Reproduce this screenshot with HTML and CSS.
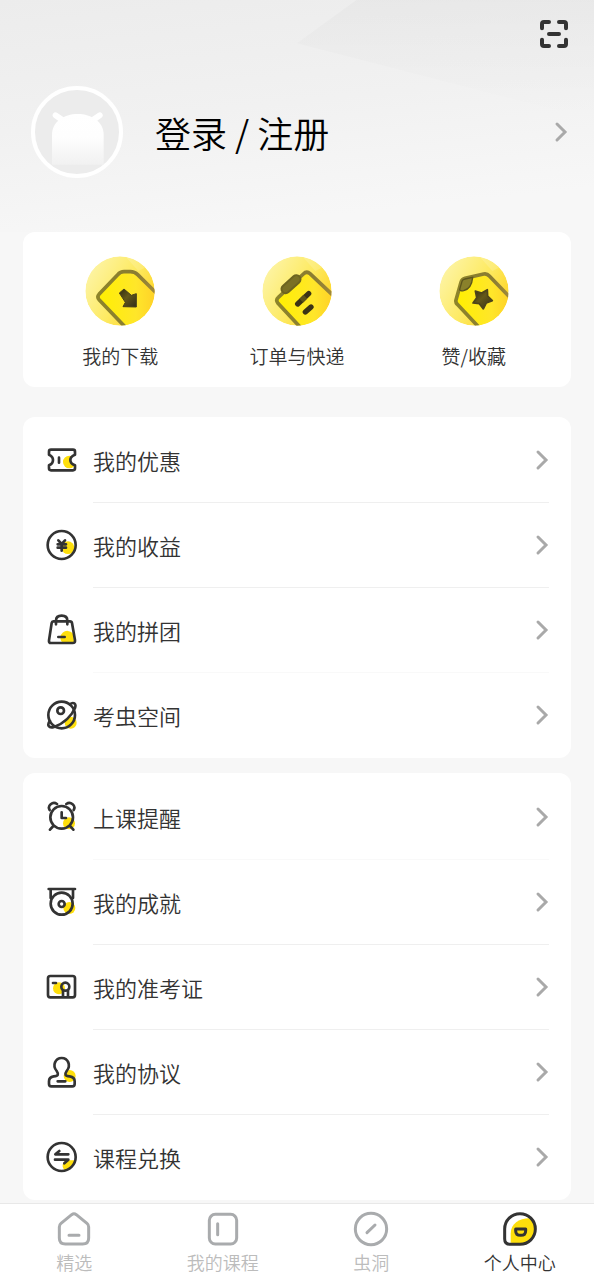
FILE: index.html
```html
<!DOCTYPE html>
<html lang="zh-CN">
<head>
<meta charset="utf-8">
<meta name="viewport" content="width=device-width, initial-scale=1">
<title>个人中心</title>
<link rel="stylesheet" href="styles.css">
</head>
<body>
<div class="page">
  <header class="hero">
    <div class="toolbar">
      <button class="scan" type="button" aria-label="扫一扫">
        <svg viewBox="0 0 84 84"><path d="M6 25V12Q6 6 12 6H27M57 6H72Q78 6 78 12V25M78 59V72Q78 78 72 78H57M27 78H12Q6 78 6 72V59M27 42H57"/></svg>
      </button>
    </div>
    <a class="profile" href="#login">
      <svg class="avatar" viewBox="0 0 276 276" aria-hidden="true">
        <defs><linearGradient id="bug" x1="0" y1="0" x2="0" y2="1"><stop offset="0" stop-color="#fff"/><stop offset=".45" stop-color="#fefefe"/><stop offset="1" stop-color="#f1f1f1"/></linearGradient></defs>
        <circle cx="138" cy="138" r="132" fill="#ececec" stroke="#fff" stroke-width="12"/>
        <path d="M74 88L94 102M206 88L186 102" stroke="#fff" stroke-width="18" stroke-linecap="round"/>
        <path d="M63 236V146C63 108 98 84 140 84S218 108 218 146V236Z" fill="url(#bug)"/>
      </svg>
      <span class="login">登录 / 注册</span>
      <svg class="chevron" viewBox="0 0 14 22" aria-hidden="true"><path d="M3 3L11 11L3 19"/></svg>
    </a>
  </header>

  <main class="content">
    <nav class="card shortcuts" aria-label="快捷入口">
      <a class="shortcut" href="#downloads">
        <svg viewBox="0 0 210 210" aria-hidden="true">
          <defs>
            <linearGradient id="disc" x1="0" y1=".15" x2="1" y2=".75"><stop offset="0" stop-color="#fdf5ac"/><stop offset=".55" stop-color="#fdea62"/><stop offset="1" stop-color="#ffd21e"/></linearGradient>
            <linearGradient id="plate" x1="0" y1="0" x2="1" y2="0"><stop offset="0" stop-color="#fff000"/><stop offset=".6" stop-color="#ffe62a"/><stop offset="1" stop-color="#ffca28"/></linearGradient>
            <linearGradient id="edge" x1="0" y1="0" x2="1" y2="0"><stop offset="0" stop-color="#8d842a"/><stop offset=".6" stop-color="#8a7c32"/><stop offset="1" stop-color="#a98e3c"/></linearGradient>
            <linearGradient id="ink" x1="0" y1="0" x2="1" y2="1"><stop offset="0" stop-color="#302b12"/><stop offset=".45" stop-color="#635819"/><stop offset="1" stop-color="#332e1b"/></linearGradient>
            <clipPath id="round"><circle cx="105" cy="105" r="104"/></clipPath>
          </defs>
          <g clip-path="url(#round)">
            <circle cx="105" cy="105" r="104" fill="url(#disc)"/>
            <path d="M120 0L160 45L210 20V0Z" fill="#fff" opacity=".16"/>
            <path d="M230 127L158 56Q149 47 136 47H117Q106 47 98 56L42 115Q35 123 43 132L135 228" fill="url(#plate)" stroke="url(#edge)" stroke-width="11"/>
            <path d="M103 111L117 99L139 118L154 113V153L114 152L121 139Z" fill="url(#ink)" stroke="#49411a" stroke-width="3" stroke-linejoin="round"/>
          </g>
        </svg>
        <span>我的下载</span>
      </a>
      <a class="shortcut" href="#orders">
        <svg viewBox="0 0 210 210" aria-hidden="true">
          <g clip-path="url(#round)">
            <circle cx="105" cy="105" r="104" fill="url(#disc)"/>
            <path d="M120 0L160 45L210 20V0Z" fill="#fff" opacity=".16"/>
            <path d="M230 134L144 53Q134 44 124 54L49 124Q40 132 48 142L130 230" fill="url(#plate)" stroke="url(#edge)" stroke-width="11"/>
            <path d="M71 99L103 70" stroke="#6d641f" stroke-width="31" stroke-linecap="round"/>
            <path d="M71 99L103 70" stroke="#7a7025" stroke-width="19" stroke-linecap="round"/>
            <path d="M107 144L140 113M130 168L147 153" stroke="#3b3315" stroke-width="16" stroke-linecap="round"/>
            <path d="M118 134L130 122" stroke="#5d5319" stroke-width="16"/>
          </g>
        </svg>
        <span>订单与快递</span>
      </a>
      <a class="shortcut" href="#favorites">
        <svg viewBox="0 0 210 210" aria-hidden="true">
          <g clip-path="url(#round)">
            <circle cx="105" cy="105" r="104" fill="url(#disc)"/>
            <path d="M120 0L160 45L210 20V0Z" fill="#fff" opacity=".16"/>
            <path d="M230 142L151 60Q144 52 134 54L78 67Q69 69 66 79L51 132Q49 139 55 145L135 230" fill="url(#plate)" stroke="url(#edge)" stroke-width="11" stroke-linejoin="round"/>
            <path d="M62 100L69 76Q71 70 78 69L101 64Q98 98 74 104Q63 106 62 100Z" fill="#8a812b" stroke="#5d551d" stroke-width="4"/>
            <path d="M145 101L146 120L160 134L142 141L133 159L121 143L102 141L113 125L109 105L128 111Z" fill="url(#ink)" stroke="#4d441b" stroke-width="5" stroke-linejoin="round"/>
          </g>
        </svg>
        <span>赞/收藏</span>
      </a>
    </nav>

    <nav class="card menu menu-first" aria-label="我的服务">
      <a class="row" href="#coupons">
        <svg class="icon" viewBox="0 0 96 96" aria-hidden="true">
          <clipPath id="ticket"><path d="M15 17H81Q87 17 87 23V32Q73 37 73 48T87 64V73Q87 79 81 79H15Q9 79 9 73V64Q21 59 21 48T9 32V23Q9 17 15 17Z"/></clipPath>
          <circle class="spot" cx="70" cy="54" r="19" clip-path="url(#ticket)"/>
          <path d="M15 17H81Q87 17 87 23V32Q73 37 73 48T87 64V73Q87 79 81 79H15Q9 79 9 73V64Q21 59 21 48T9 32V23Q9 17 15 17ZM39 41V56"/>
        </svg>
        <span class="label">我的优惠</span>
        <svg class="chevron" viewBox="0 0 14 22" aria-hidden="true"><path d="M3 3L11 11L3 19"/></svg>
      </a>
      <a class="row" href="#earnings">
        <svg class="icon" viewBox="0 0 96 96" aria-hidden="true">
          <circle class="spot" cx="66" cy="56" r="19"/>
          <circle cx="47" cy="48" r="42"/>
          <path d="M37 34L47 45L57 34M47 45V65M35 46H60M35 56H60"/>
        </svg>
        <span class="label">我的收益</span>
        <svg class="chevron" viewBox="0 0 14 22" aria-hidden="true"><path d="M3 3L11 11L3 19"/></svg>
      </a>
      <a class="row" href="#groups">
        <svg class="icon" viewBox="0 0 96 96" aria-hidden="true">
          <path class="spot" d="M48 85A18 18 0 1 1 80 58L85 85Z"/>
          <path d="M22 22H72Q77 22 78 27L87 79Q88 87 80 87H15Q8 87 9 79L17 27Q18 22 22 22ZM30 31V20Q30 5 47 5T64 20V31M37 69H56"/>
        </svg>
        <span class="label">我的拼团</span>
        <svg class="chevron" viewBox="0 0 14 22" aria-hidden="true"><path d="M3 3L11 11L3 19"/></svg>
      </a>
      <a class="row faint" href="#space">
        <svg class="icon" viewBox="0 0 96 96" aria-hidden="true">
          <circle class="spot" cx="74" cy="71" r="18"/>
          <circle cx="47" cy="48" r="40"/>
          <circle cx="44" cy="35" r="10"/>
          <path d="M71 16C82 8 92 13 87 27C78 49 55 73 24 84C8 89 2 77 12 66"/>
        </svg>
        <span class="label">考虫空间</span>
        <svg class="chevron" viewBox="0 0 14 22" aria-hidden="true"><path d="M3 3L11 11L3 19"/></svg>
      </a>
    </nav>

    <nav class="card menu" aria-label="学习服务">
      <a class="row" href="#reminders">
        <svg class="icon" viewBox="0 0 96 96" aria-hidden="true">
          <circle class="spot" cx="69" cy="67" r="18"/>
          <circle cx="47" cy="49" r="34"/>
          <path d="M11 27C3 14 20 0 33 9M83 27C91 14 74 0 61 9M22 75L12 86M72 75L82 86M47 34V51H60"/>
        </svg>
        <span class="label">上课提醒</span>
        <svg class="chevron" viewBox="0 0 14 22" aria-hidden="true"><path d="M3 3L11 11L3 19"/></svg>
      </a>
      <a class="row faint" href="#achievements">
        <svg class="icon" viewBox="0 0 96 96" aria-hidden="true">
          <circle class="spot" cx="70" cy="66" r="18"/>
          <path d="M8 9H87M14 10V36M81 10V36"/>
          <circle cx="47" cy="53" r="33"/>
          <circle cx="47" cy="54" r="9"/>
        </svg>
        <span class="label">我的成就</span>
        <svg class="chevron" viewBox="0 0 14 22" aria-hidden="true"><path d="M3 3L11 11L3 19"/></svg>
      </a>
      <a class="row" href="#admission">
        <svg class="icon" viewBox="0 0 96 96" aria-hidden="true">
          <circle class="spot" cx="39" cy="52" r="18"/>
          <rect x="6" y="15" width="81" height="64" rx="7"/>
          <path d="M21 36H30M51 57V76M66 57V76"/>
          <circle cx="58" cy="47" r="12"/>
        </svg>
        <span class="label">我的准考证</span>
        <svg class="chevron" viewBox="0 0 14 22" aria-hidden="true"><path d="M3 3L11 11L3 19"/></svg>
      </a>
      <a class="row" href="#agreements">
        <svg class="icon" viewBox="0 0 96 96" aria-hidden="true">
          <circle class="spot" cx="71" cy="60" r="18"/>
          <path d="M9 84V76Q9 63 23 61C38 60 38 54 32 45C18 28 28 6 47 6S76 28 62 45C56 54 56 60 71 61Q86 63 86 76V84Q86 91 79 91H16Q9 91 9 84ZM35 76H58"/>
        </svg>
        <span class="label">我的协议</span>
        <svg class="chevron" viewBox="0 0 14 22" aria-hidden="true"><path d="M3 3L11 11L3 19"/></svg>
      </a>
      <a class="row" href="#redeem">
        <svg class="icon" viewBox="0 0 96 96" aria-hidden="true">
          <path class="spot" d="M54 86A18 18 0 0 1 60 58H87A42 42 0 0 1 54 89Z"/>
          <circle cx="47" cy="48" r="42"/>
          <path d="M40 30L28 40H67M27 56H67L55 67"/>
        </svg>
        <span class="label">课程兑换</span>
        <svg class="chevron" viewBox="0 0 14 22" aria-hidden="true"><path d="M3 3L11 11L3 19"/></svg>
      </a>
    </nav>
  </main>

  <nav class="tabs" aria-label="主导航">
    <a class="tab" href="#featured">
      <svg viewBox="0 0 108 108" aria-hidden="true"><path d="M47 11Q54 6 61 11L93 37Q98 41 98 48V81Q98 99 80 99H28Q10 99 10 81V48Q10 41 15 37ZM39 73H69"/></svg>
      <span>精选</span>
    </a>
    <a class="tab" href="#courses">
      <svg viewBox="0 0 108 108" aria-hidden="true"><rect x="13" y="10" width="82" height="89" rx="18"/><path d="M38 38V71"/></svg>
      <span>我的课程</span>
    </a>
    <a class="tab" href="#wormhole">
      <svg viewBox="0 0 108 108" aria-hidden="true"><circle cx="54" cy="54" r="47"/><path d="M42 65L66 42"/></svg>
      <span>虫洞</span>
    </a>
    <a class="tab active" href="#me" aria-current="page">
      <svg viewBox="0 0 108 108" aria-hidden="true">
        <path class="spot" d="M26 95V68C26 39 51 22 82 22Q99 36 99 54A45 45 0 0 1 54 98Z"/>
        <path d="M54 8A46 46 0 1 1 54 100H24Q8 100 8 84V54A46 46 0 0 1 54 8ZM41 54H71V59Q71 73 56 73T41 59Z"/>
      </svg>
      <span>个人中心</span>
    </a>
  </nav>
</div>
</body>
</html>
```

FILE: styles.css
```css
* {
  box-sizing: border-box;
}

body {
  margin: 0;
  background: #f7f7f7;
  color: #333;
  font-family: "Noto Sans CJK SC", sans-serif;
  font-weight: 350;
}

a {
  color: inherit;
  text-decoration: none;
}

svg {
  display: block;
  flex: none;
  fill: none;
}

.page {
  display: flex;
  flex-direction: column;
  min-height: 100vh;
}

.hero {
  position: relative;
  padding: 20px 26px 54px 31px;
  background: linear-gradient(174deg, #ececec 0%, #f1f1f1 45%, #f7f7f7 85%);
}

.hero::before {
  content: "";
  position: absolute;
  top: 0;
  right: 0;
  width: 50%;
  height: 120px;
  background: linear-gradient(to bottom, rgba(0, 0, 0, 0.025), rgba(0, 0, 0, 0));
  clip-path: polygon(20% 0, 100% 0, 100% 100%, 0 36%);
}

.toolbar {
  position: relative;
  display: flex;
  justify-content: flex-end;
}

.scan {
  padding: 0;
  border: 0;
  background: none;
}

.scan svg {
  width: 28px;
  height: 28px;
  stroke: #333;
  stroke-width: 12;
  stroke-linecap: round;
}

.profile {
  position: relative;
  display: flex;
  align-items: center;
  margin-top: 38px;
  color: #000;
}

.avatar {
  width: 92px;
  height: 92px;
}

.login {
  flex: 1;
  margin-left: 32px;
  font-size: 36px;
  line-height: 48px;
}

.chevron {
  width: 14px;
  height: 22px;
  stroke: #a9a9a9;
  stroke-width: 3;
  stroke-linecap: round;
}

.content {
  flex: 1;
  padding: 0 23px 3px;
}

.card {
  border-radius: 12px;
  background: #fff;
}

.shortcuts {
  display: grid;
  grid-template-columns: repeat(3, 1fr);
  padding: 24px 9px 17px;
}

.shortcut {
  display: flex;
  flex-direction: column;
  align-items: center;
  gap: 16px;
  font-size: 19px;
  line-height: 28px;
}

.shortcut svg {
  width: 70px;
  height: 70px;
}

.menu {
  margin-top: 15px;
  padding: 1px 0;
}

.menu-first {
  margin-top: 30px;
  padding-top: 0;
}

.row {
  position: relative;
  display: flex;
  align-items: center;
  height: 85px;
  padding: 0 22px 0 23px;
}

.row + .row::before {
  content: "";
  position: absolute;
  top: 0;
  left: 70px;
  right: 22px;
  height: 1px;
  background: #efefef;
}

.row + .faint::before {
  background: #f9f9f9;
}

.icon {
  width: 32px;
  height: 32px;
  stroke: #333;
  stroke-width: 8;
  stroke-linecap: round;
  stroke-linejoin: round;
}

.spot {
  fill: #fedf0c;
  stroke: none;
}

.label {
  flex: 1;
  margin-left: 15px;
  font-size: 22px;
  line-height: 32px;
}

.tabs {
  position: sticky;
  bottom: 0;
  display: grid;
  grid-template-columns: repeat(4, 1fr);
  padding: 7px 0 6px;
  border-top: 1px solid #e8e8e8;
  background: #fff;
}

.tab {
  display: flex;
  flex-direction: column;
  align-items: center;
  gap: 3px;
  color: #bcbcbc;
  font-size: 18px;
  line-height: 24px;
}

.tab svg {
  width: 36px;
  height: 36px;
  stroke: #a9abad;
  stroke-width: 9;
  stroke-linecap: round;
  stroke-linejoin: round;
}

.tab.active {
  color: #333;
}

.tab.active svg {
  stroke: #333;
}
```
